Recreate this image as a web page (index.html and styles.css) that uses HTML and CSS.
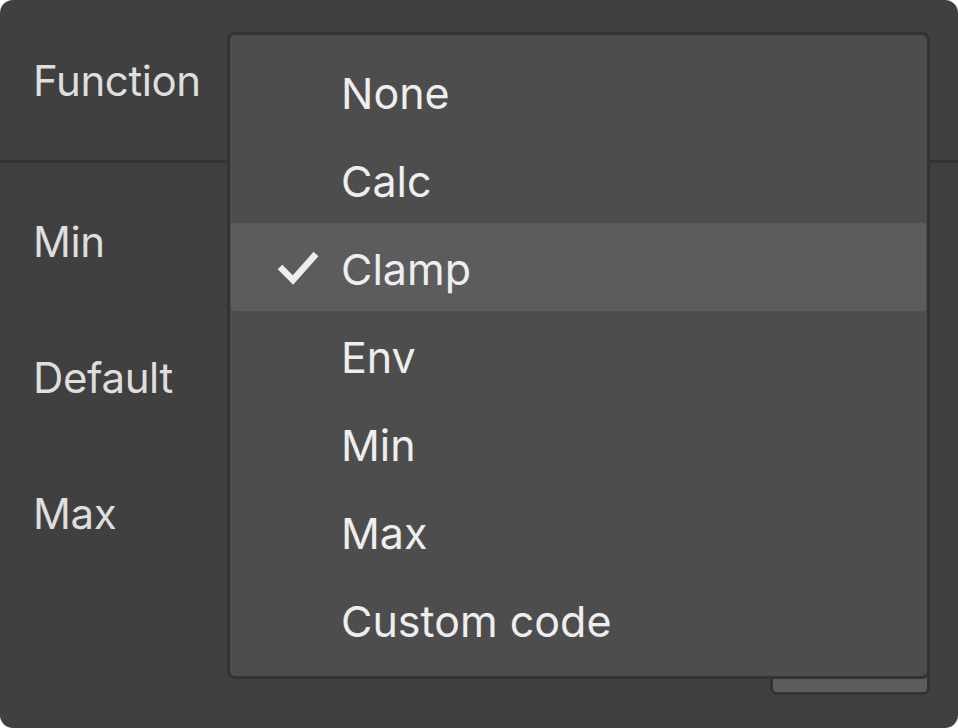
FILE: index.html
```html
<!DOCTYPE html>
<html>
<head>
<meta charset="utf-8">
<link rel="stylesheet" href="styles.css">
</head>
<body>
<div class="panel">
  <div class="header">
    <span class="label">Function</span>
  </div>
  <div class="body">
    <div class="row"><span class="label">Min</span></div>
    <div class="row"><span class="label">Default</span></div>
    <div class="row"><span class="label">Max</span></div>
    <div class="footer"><div class="field"></div></div>
  </div>
  <div class="menu">
    <div class="item">None</div>
    <div class="item">Calc</div>
    <div class="item selected">
      <svg class="check" width="44" height="36" viewBox="0 0 44 36"><path d="M4 17 L17 30 L40 4" fill="none" stroke="#eeeeee" stroke-width="6.5"/></svg>
      Clamp
    </div>
    <div class="item">Env</div>
    <div class="item">Min</div>
    <div class="item">Max</div>
    <div class="item">Custom code</div>
  </div>
</div>
</body>
</html>
```

FILE: styles.css
```css
html, body {
  margin: 0;
  padding: 0;
  background: #ffffff;
}
body {
  width: 958px;
  height: 728px;
  font-family: Inter, "Noto Sans", sans-serif;
}
.panel {
  position: relative;
  width: 958px;
  height: 728px;
  background: #404040;
  border-radius: 13px;
  display: flex;
  flex-direction: column;
  overflow: hidden;
}
.header {
  height: 160px;
  border-bottom: 3px solid #333333;
  display: flex;
  align-items: center;
  padding-left: 33px;
}
.label {
  font-size: 42px;
  letter-spacing: -0.4px;
  line-height: 1;
  color: #dedede;
  padding-top: 1px;
}
.body {
  flex: 1;
  display: flex;
  flex-direction: column;
  padding-top: 10px;
}
.row {
  height: 136px;
  display: flex;
  align-items: center;
  padding-left: 33px;
}
.footer {
  flex: 1;
  display: flex;
  justify-content: flex-end;
  align-items: flex-end;
  padding: 0 28px 33px 0;
}
.field {
  width: 154px;
  height: 40px;
  background: #5c5c5c;
  border: 3px solid #333333;
  border-radius: 7px;
}
.menu {
  position: absolute;
  left: 227px;
  top: 32px;
  width: 697px;
  height: 617px;
  padding: 12px 0;
  background: #4d4d4d;
  border: 3px solid #333333;
  border-radius: 8px;
  box-sizing: content-box;
  display: flex;
  flex-direction: column;
}
.item {
  position: relative;
  height: 88px;
  margin: 0 1px;
  display: flex;
  align-items: center;
  padding-left: 110px;
  padding-top: 3px;
  box-sizing: border-box;
  font-size: 43px;
  color: #eeeeee;
  border-radius: 3px;
}
.item.selected {
  background: #5c5c5c;
}
.check {
  position: absolute;
  left: 45px;
  top: 27px;
}
```
